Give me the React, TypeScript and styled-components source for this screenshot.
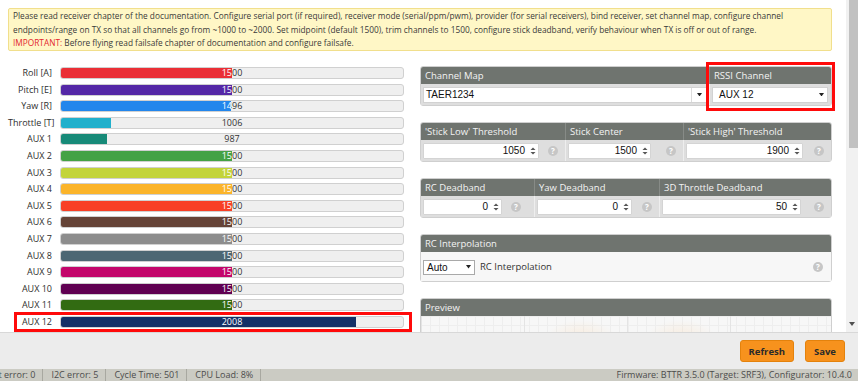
import React from 'react'
import styled, { createGlobalStyle, css } from 'styled-components'

const GlobalStyle = createGlobalStyle`
  html, body {
    margin: 0;
    padding: 0;
    height: 100%;
    overflow: hidden;
    background: #fff;
  }
  body {
    font-family: "Open Sans", "Liberation Sans", sans-serif;
    color: #333;
  }
  * { box-sizing: border-box; }
`

type Channel = { name: string, value: number, color: string, highlight?: boolean }

const channels: Channel[] = [
    { name: 'Roll [A]', value: 1500, color: '#ea2f36' },
    { name: 'Pitch [E]', value: 1500, color: '#5427a6' },
    { name: 'Yaw [R]', value: 1496, color: '#2286ec' },
    { name: 'Throttle [T]', value: 1006, color: '#21b0cc' },
    { name: 'AUX 1', value: 987, color: '#178a78' },
    { name: 'AUX 2', value: 1500, color: '#44a245' },
    { name: 'AUX 3', value: 1500, color: '#c3d43a' },
    { name: 'AUX 4', value: 1500, color: '#fbb42a' },
    { name: 'AUX 5', value: 1500, color: '#f83f25' },
    { name: 'AUX 6', value: 1500, color: '#654337' },
    { name: 'AUX 7', value: 1500, color: '#8d8d8d' },
    { name: 'AUX 8', value: 1500, color: '#4d6773' },
    { name: 'AUX 9', value: 1500, color: '#c3066b' },
    { name: 'AUX 10', value: 1500, color: '#600052' },
    { name: 'AUX 11', value: 1500, color: '#326b12' },
    { name: 'AUX 12', value: 2008, color: '#143067', highlight: true },
]

const METER_MIN = 800
const METER_MAX = 2200

const Root = styled.div`
    height: 100vh;
    width: 100vw;
    display: flex;
    flex-direction: column;
    overflow: hidden;
`

const Main = styled.div`
    flex: 1;
    min-height: 0;
    display: flex;
`

const Content = styled.div`
    flex: 1;
    overflow: hidden;
    padding: 8px 14px 0 8px;
`

const Scrollbar = styled.div`
    width: 12px;
    background: #f1f1f1;
    display: flex;
    flex-direction: column;
    justify-content: space-between;
    align-items: flex-end;
`

const Thumb = styled.div`
    width: 9px;
    height: 148px;
    background: #c1c1c1;
`

const ScrollArrow = styled.div`
    width: 12px;
    height: 12px;
    display: flex;
    align-items: center;
    justify-content: center;
    margin-bottom: 2px;
`

const Note = styled.div`
    background: #fff7c6;
    border: 1px solid #f1df8c;
    border-radius: 2px;
    padding: 0 4px;
    font-size: 8.3px;
    line-height: 13.5px;
    color: #3a3a3a;
`

const Important = styled.span`
    color: #e3262e;
`

const Columns = styled.div`
    display: grid;
    grid-template-columns: 404px 412px;
    column-gap: 8px;
    margin-top: 15.5px;
    align-items: start;
`

const Meters = styled.div`
    display: flex;
    flex-direction: column;
    gap: 4.6px;
    padding-top: 1px;
`

const MeterRow = styled.div<{ $highlight?: boolean }>`
    position: relative;
    display: grid;
    grid-template-columns: 44px 344px;
    column-gap: 8px;
    align-items: center;
    height: 12px;
    ${p => p.$highlight && css`
        &::after {
            content: '';
            position: absolute;
            top: -4px;
            bottom: -4px;
            left: 6px;
            right: 0;
            border: 3px solid #ff0a0a;
        }
    `}
`

const MeterLabel = styled.div`
    text-align: right;
    font-size: 9px;
    line-height: 12px;
    white-space: nowrap;
    color: #2e2e2e;
`

const Track = styled.div`
    position: relative;
    height: 12px;
    background: #efefef;
    border: 1px solid #d0d0d0;
    border-radius: 3px;
    overflow: hidden;
`

const TrackValue = styled.div<{ $light?: boolean }>`
    width: 342px;
    text-align: center;
    font-size: 9px;
    line-height: 10px;
    color: ${p => p.$light ? '#fff' : '#333'};
`

const Fill = styled.div<{ $color: string }>`
    position: absolute;
    left: 0;
    top: 0;
    bottom: 0;
    overflow: hidden;
    background: ${p => p.$color};
`

const Panels = styled.div`
    display: flex;
    flex-direction: column;
    gap: 16px;
`

const Panel = styled.div<{ $cols: string }>`
    display: grid;
    grid-template-columns: ${p => p.$cols};
    border: 1px solid #cfcfcf;
    border-radius: 3px;
`

const Head = styled.div`
    height: 17px;
    line-height: 17px;
    background: #6f746f;
    color: #f3f3f3;
    font-size: 9.5px;
    padding: 0 4px;
    white-space: nowrap;
`

const Body = styled.div<{ $light?: boolean, $tall?: boolean }>`
    height: ${p => p.$tall ? '29px' : '21px'};
    background: ${p => p.$light ? '#f7f7f7' : '#dedede'};
    display: flex;
    align-items: center;
    padding: 0 0 0 2px;
`

const Section = styled.div<{ $mark?: boolean }>`
    position: relative;
    display: flex;
    flex-direction: column;
    &:first-child > ${Head} { border-top-left-radius: 2px; }
    &:last-child > ${Head} { border-top-right-radius: 2px; }
    &:not(:first-child) > ${Head} { border-left: 1px solid #878b87; }
    &:not(:first-child) > ${Body} { border-left: 1px solid #eeeeee; }
    ${p => p.$mark && css`
        &::after {
            content: '';
            position: absolute;
            top: -5px;
            bottom: -6px;
            left: -3px;
            right: -4px;
            border: 3px solid #ff0a0a;
        }
    `}
`

const SelectBox = styled.div<{ $pad?: number, $right?: number }>`
    flex: 1;
    height: 16px;
    background: #fff;
    border: 1px solid #d2d2d2;
    display: flex;
    align-items: center;
    font-family: "Liberation Sans", Arial, sans-serif;
    font-size: 10px;
    color: #111;
    padding-left: ${p => p.$pad ?? 2}px;
    margin-right: ${p => p.$right ?? 2}px;
`

const SelectText = styled.span`
    flex: 1;
`

const ArrowCell = styled.div<{ $split?: boolean }>`
    width: ${p => p.$split ? '15px' : '12px'};
    height: 100%;
    display: flex;
    align-items: center;
    justify-content: center;
    border-left: ${p => p.$split ? '1px solid #dcdcdc' : 'none'};
`

const NumberBox = styled.div<{ $width: number }>`
    width: ${p => p.$width}px;
    height: 16px;
    background: #fff;
    border: 1px solid #d4d4d4;
    border-radius: 1px;
    display: flex;
    align-items: center;
    justify-content: flex-end;
    padding-right: 2px;
    font-family: "Liberation Sans", Arial, sans-serif;
    font-size: 10px;
    color: #111;
    gap: 5px;
`

const Help = styled.div<{ $gap?: number }>`
    width: 10px;
    height: 10px;
    border-radius: 50%;
    background: #c6c6c6;
    color: #fff;
    font-size: 8px;
    font-weight: 700;
    line-height: 10px;
    text-align: center;
    margin-left: auto;
    margin-right: ${p => p.$gap ?? 7}px;
    flex: none;
`

const NativeSelect = styled.div`
    width: 52px;
    height: 15px;
    background: #fff;
    border: 1px solid #a9a9a9;
    display: flex;
    align-items: center;
    padding-left: 3px;
    font-family: "Liberation Sans", Arial, sans-serif;
    font-size: 10px;
    color: #111;
    margin-top: 1px;
`

const InlineLabel = styled.span`
    font-size: 9.5px;
    color: #333;
    margin-left: 5px;
`

const PreviewBody = styled.div`
    height: 420px;
    background-color: #f7f7f7;
    background-image:
        radial-gradient(ellipse 50px 26px at 160px 22px, rgba(250, 175, 90, 0.16), transparent 70%),
        radial-gradient(ellipse 50px 26px at 260px 22px, rgba(250, 175, 90, 0.16), transparent 70%),
        linear-gradient(90deg, #e4e4e4 1px, transparent 1px),
        linear-gradient(#eeeeee 1px, transparent 1px),
        linear-gradient(90deg, #eeeeee 1px, transparent 1px);
    background-size: 100% 100%, 100% 100%, 103px 103px, 9px 9px, 9px 9px;
`

const Toolbar = styled.div`
    height: 37px;
    background: #ececec;
    border-top: 1px solid #d8d8d8;
    display: flex;
    justify-content: flex-end;
    align-items: flex-start;
    gap: 11px;
    padding: 7px 13px 0 0;
`

const ActionButton = styled.button`
    height: 22px;
    padding: 0 8px;
    background: #f7921d;
    border: 1px solid #e4820c;
    border-radius: 3px;
    font-family: "Open Sans", "Liberation Sans", sans-serif;
    font-size: 9.5px;
    font-weight: 700;
    color: #2a2a2a;
    cursor: pointer;
`

const StatusBar = styled.div`
    height: 12px;
    background: #cbcbc3;
    display: flex;
    align-items: flex-start;
    font-size: 9px;
    line-height: 12px;
    color: #4b4b4b;
    overflow: hidden;
    white-space: nowrap;
`

const StatusItem = styled.div<{ $shift?: number }>`
    padding: 0 7px 0 8px;
    border-right: 1px solid #a8a8a0;
    height: 100%;
    margin-left: ${p => p.$shift ?? 0}px;
`

const Firmware = styled.div`
    margin-left: auto;
    padding-right: 6px;
`

function TriangleDown({ size = 5 }: { size?: number }) {
    return (
        <svg width={size} height={size * 0.7} viewBox="0 0 10 7">
            <path d="M0 0 L10 0 L5 7 Z" fill="#222" />
        </svg>
    )
}

function Spinner() {
    return (
        <svg width="6" height="10" viewBox="0 0 6 10">
            <path d="M0.5 4 L3 1.5 L5.5 4 Z" fill="#555" />
            <path d="M0.5 6 L3 8.5 L5.5 6 Z" fill="#555" />
        </svg>
    )
}

function Meter({ ch }: { ch: Channel }) {
    const pct = Math.max(0, Math.min(1, (ch.value - METER_MIN) / (METER_MAX - METER_MIN))) * 100
    return (
        <MeterRow $highlight={ch.highlight}>
            <MeterLabel>{ch.name}</MeterLabel>
            <Track>
                <TrackValue>{ch.value}</TrackValue>
                <Fill $color={ch.color} style={{ width: pct + '%' }}>
                    <TrackValue $light>{ch.value}</TrackValue>
                </Fill>
            </Track>
        </MeterRow>
    )
}

type Field = { title: string, value: string, width: number, gap?: number }

function NumberPanel({ cols, fields }: { cols: string, fields: Field[] }) {
    return (
        <Panel $cols={cols}>
            {fields.map(f => (
                <Section key={f.title}>
                    <Head>{f.title}</Head>
                    <Body>
                        <NumberBox $width={f.width}>
                            <span>{f.value}</span>
                            <Spinner />
                        </NumberBox>
                        <Help $gap={f.gap}>?</Help>
                    </Body>
                </Section>
            ))}
        </Panel>
    )
}

export default function App() {
    return (
        <Root>
            <GlobalStyle />
            <Main>
                <Content>
                    <Note>
                        Please read receiver chapter of the documentation. Configure serial port (if required), receiver mode (serial/ppm/pwm), provider (for serial receivers), bind receiver, set channel map, configure channel endpoints/range on TX so that all channels go from ~1000 to ~2000. Set midpoint (default 1500), trim channels to 1500, configure stick deadband, verify behaviour when TX is off or out of range.<br />
                        <Important>IMPORTANT:</Important> Before flying read failsafe chapter of documentation and configure failsafe.
                    </Note>
                    <Columns>
                        <Meters>
                            {channels.map(ch => <Meter key={ch.name} ch={ch} />)}
                        </Meters>
                        <Panels>
                            <Panel $cols="288px 1fr">
                                <Section>
                                    <Head>Channel Map</Head>
                                    <Body>
                                        <SelectBox $pad={2} $right={2}>
                                            <SelectText>TAER1234</SelectText>
                                            <ArrowCell $split><TriangleDown /></ArrowCell>
                                        </SelectBox>
                                    </Body>
                                </Section>
                                <Section $mark>
                                    <Head>RSSI Channel</Head>
                                    <Body>
                                        <SelectBox $pad={6} $right={3}>
                                            <SelectText>AUX 12</SelectText>
                                            <ArrowCell><TriangleDown /></ArrowCell>
                                        </SelectBox>
                                    </Body>
                                </Section>
                            </Panel>
                            <NumberPanel
                                cols="144px 118px 1fr"
                                fields={[
                                    { title: "'Stick Low' Threshold", value: '1050', width: 116 },
                                    { title: 'Stick Center', value: '1500', width: 83 },
                                    { title: "'Stick High' Threshold", value: '1900', width: 117 },
                                ]}
                            />
                            <NumberPanel
                                cols="113px 125px 1fr"
                                fields={[
                                    { title: 'RC Deadband', value: '0', width: 79, gap: 13 },
                                    { title: 'Yaw Deadband', value: '0', width: 95 },
                                    { title: '3D Throttle Deadband', value: '50', width: 139 },
                                ]}
                            />
                            <Panel $cols="1fr">
                                <Section>
                                    <Head>RC Interpolation</Head>
                                    <Body $light $tall>
                                        <NativeSelect>
                                            <SelectText>Auto</SelectText>
                                            <ArrowCell><TriangleDown /></ArrowCell>
                                        </NativeSelect>
                                        <InlineLabel>RC Interpolation</InlineLabel>
                                        <Help $gap={8}>?</Help>
                                    </Body>
                                </Section>
                            </Panel>
                            <Panel $cols="1fr">
                                <Section>
                                    <Head>Preview</Head>
                                    <PreviewBody />
                                </Section>
                            </Panel>
                        </Panels>
                    </Columns>
                </Content>
                <Scrollbar>
                    <Thumb />
                    <ScrollArrow>
                        <svg width="6" height="4" viewBox="0 0 6 4"><path d="M0 0 L6 0 L3 4 Z" fill="#505050" /></svg>
                    </ScrollArrow>
                </Scrollbar>
            </Main>
            <Toolbar>
                <ActionButton>Refresh</ActionButton>
                <ActionButton>Save</ActionButton>
            </Toolbar>
            <StatusBar>
                <StatusItem $shift={-34}>Packet error: 0</StatusItem>
                <StatusItem>I2C error: 5</StatusItem>
                <StatusItem>Cycle Time: 501</StatusItem>
                <StatusItem>CPU Load: 8%</StatusItem>
                <Firmware>Firmware: BTTR 3.5.0 (Target: SRF3), Configurator: 10.4.0</Firmware>
            </StatusBar>
        </Root>
    )
}
